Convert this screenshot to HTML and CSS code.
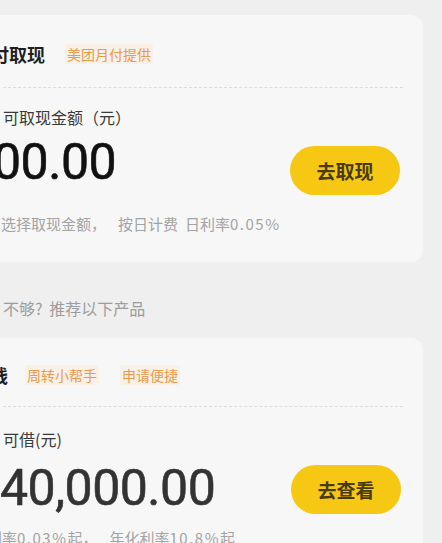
FILE: index.html
```html
<!DOCTYPE html>
<html lang="zh-CN">
<head>
<meta charset="utf-8">
<title>月付取现</title>
<link rel="stylesheet" href="styles.css">
</head>
<body>
<div class="page">
  <section class="card card-cash">
    <div class="card-head">
      <span class="title title-cash">月付取现</span>
      <span class="tag">美团月付提供</span>
    </div>
    <div class="divider"></div>
    <div class="label">可取现金额（元）</div>
    <div class="amount-row">
      <div class="amount amount-cash">00.00</div>
      <button class="btn btn-cash">去取现</button>
    </div>
    <div class="note note-cash">选择取现金额，<span class="gap-l">按日计费</span><span class="gap-s">日利率</span><span class="num">0.05%</span></div>
  </section>

  <div class="hint">不够? 推荐以下产品</div>

  <section class="card card-loan">
    <div class="card-head head-loan">
      <span class="title title-loan">借钱</span>
      <span class="tag">周转小帮手</span>
      <span class="tag">申请便捷</span>
    </div>
    <div class="divider divider-loan"></div>
    <div class="label label-loan">可借(元)</div>
    <div class="amount-row row-loan">
      <div class="amount amount-loan">40,000.00</div>
      <button class="btn btn-loan">去查看</button>
    </div>
    <div class="note note-loan">日利率<span class="num">0.03%</span>起，<span class="gap-l">年化利率</span><span class="num">10.8%</span>起</div>
  </section>
</div>
</body>
</html>
```

FILE: styles.css
```css
* { box-sizing: border-box; }
html, body {
  margin: 0;
  padding: 0;
  background: #efefef;
  overflow: hidden;
}
body {
  width: 442px;
  height: 543px;
  font-family: "Noto Sans CJK SC", "Noto Sans", sans-serif;
  color: #222;
}
.page {
  padding: 15px 19px 0 0;
  margin-left: -20px;
}
.card {
  background: #f7f7f7;
  border-radius: 12px;
  padding: 24px 20px 28px 23px;
}
.card-head {
  display: flex;
  align-items: center;
  gap: 20px;
  height: 30px;
}
.title {
  font-size: 18px;
  font-weight: 700;
  color: #1f1f1f;
  line-height: 30px;
  white-space: nowrap;
}
.title-cash { margin-left: -30px; }
.title-loan { margin-left: -31px; margin-right: -2px; }
.tag {
  font-size: 14px;
  line-height: 20px;
  color: #e79b4e;
  background: #f9f0e6;
  border-radius: 3px;
  padding: 0 2px;
  white-space: nowrap;
}
.head-loan { gap: 19px; }
.head-loan .tag + .tag { margin-left: 2px; }
.divider {
  margin-top: 18px;
  border-top: 1px dashed #dcdcdc;
}
.label {
  margin-top: 18px;
  font-size: 16px;
  line-height: 22px;
  color: #3a3a3a;
}
.amount-row {
  margin-top: 8px;
  display: flex;
  justify-content: space-between;
  align-items: flex-start;
}
.amount {
  font-family: Roboto, "Liberation Sans", sans-serif;
  font-size: 50px;
  line-height: 52px;
  font-weight: 400;
  white-space: nowrap;
  letter-spacing: -0.5px;
  -webkit-text-stroke: 0.6px currentColor;
}
.amount-cash { color: #111; margin-left: -10px; }
.amount-loan { color: #333; margin-left: -3px; }
.btn {
  width: 110px;
  height: 49px;
  border: none;
  border-radius: 25px;
  background: #f6c814;
  color: #4a3a0c;
  font-family: "Noto Sans CJK SC", sans-serif;
  font-size: 19px;
  font-weight: 700;
  padding: 0;
  margin-top: 10px;
  margin-right: 3px;
}
.note {
  margin-top: 19px;
  font-size: 15px;
  line-height: 20px;
  color: #a3a3a3;
  white-space: nowrap;
}
.note .num { letter-spacing: 1.5px; }
.note .gap-l { margin-left: 12px; }
.note .gap-s { margin-left: 7px; }
.note-cash { margin-left: -2px; }
.hint {
  padding: 36px 0 0 23px;
  height: 76px;
  font-size: 16px;
  line-height: 20px;
  color: #9c9c9c;
  word-spacing: 3px;
}
.card-loan { padding-top: 22px; }
.divider-loan { margin-top: 16px; }
.label-loan { margin-top: 21px; }
.row-loan { margin-top: 12px; }
.btn-loan { margin-top: 3px; margin-right: 2px; }
.note-loan { margin-top: 14px; margin-left: -31px; }
```
